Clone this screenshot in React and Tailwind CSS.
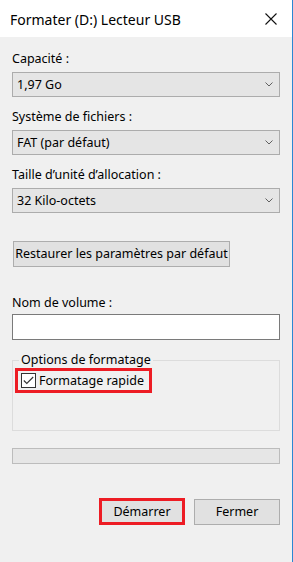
import React from 'react';

const Chevron = () => (
  <svg width="8" height="5" viewBox="0 0 8 5" fill="none">
    <path d="M0.5 0.5 L4 4 L7.5 0.5" stroke="#606060" strokeWidth="1" />
  </svg>
);

function Select({ value }) {
  return (
    <div className="h-[25px] border border-[#acacac] bg-[#e5e5e5] flex items-center justify-between pl-[4px] pr-[6px]">
      <span>{value}</span>
      <Chevron />
    </div>
  );
}

export default function App() {
  return (
    <div className="w-[293px] h-[562px] bg-[#f0f0f0] border-r border-[#2b87d3] flex flex-col text-[12.5px] leading-[16px] text-black whitespace-nowrap font-['Noto_Sans',sans-serif]">
      {/* title bar */}
      <div className="h-[37px] bg-white flex items-center justify-between pl-[10px] pr-[15px] shrink-0">
        <span className="text-[14px] mt-[3px]">Formater (D:) Lecteur USB</span>
        <svg width="12" height="12" viewBox="0 0 12 12" className="mt-[1px]">
          <path d="M0.5 0.5 L11.5 11.5 M11.5 0.5 L0.5 11.5" stroke="#111" strokeWidth="1.1" />
        </svg>
      </div>

      <div className="flex flex-col px-[12px]">
        <div className="mt-[14px]">Capacité :</div>
        <div className="mt-[5px]"><Select value="1,97 Go" /></div>

        <div className="mt-[12px]">Système de fichiers :</div>
        <div className="mt-[5px]"><Select value="FAT (par défaut)" /></div>

        <div className="mt-[12px]">Taille d’unité d’allocation :</div>
        <div className="mt-[5px]"><Select value="32 Kilo-octets" /></div>

        <button className="mt-[28px] ml-[1px] w-[217px] h-[26px] border border-[#adadad] bg-[#e1e1e1] flex items-center justify-center">
          Restaurer les paramètres par défaut
        </button>

        <div className="mt-[28px]">Nom de volume :</div>
        <input className="mt-[3px] h-[26px] border border-[#7a7a7a] bg-white outline-none" type="text" />

        <fieldset className="mt-[12px] border border-[#dcdcdc]">
          <legend className="ml-[6px] px-[2px]">Options de formatage</legend>
          <div className="h-[62px]">
            <div className="ml-[2px] w-[137px] h-[25px] border-[3px] border-[#ed1c24] flex items-center">
              <span className="ml-[3px] w-[15px] h-[15px] border border-[#333] bg-white flex items-center justify-center">
                <svg width="11" height="9" viewBox="0 0 11 9" fill="none">
                  <path d="M0.8 4.5 L3.8 7.5 L10.2 1" stroke="#333" strokeWidth="1.1" />
                </svg>
              </span>
              <span className="ml-[3px]">Formatage rapide</span>
            </div>
          </div>
        </fieldset>

        <div className="mt-[17px] h-[16px] border border-[#bcbcbc] bg-[#e6e6e6]" />

        <div className="mt-[34px] flex justify-end items-center gap-[9px]">
          <button className="w-[86px] h-[27px] border-[3px] border-[#ed1c24] bg-[#e1e1e1] flex items-center justify-center">
            Démarrer
          </button>
          <button className="w-[86px] h-[26px] border border-[#adadad] bg-[#e1e1e1] flex items-center justify-center">
            Fermer
          </button>
        </div>
      </div>
    </div>
  );
}
